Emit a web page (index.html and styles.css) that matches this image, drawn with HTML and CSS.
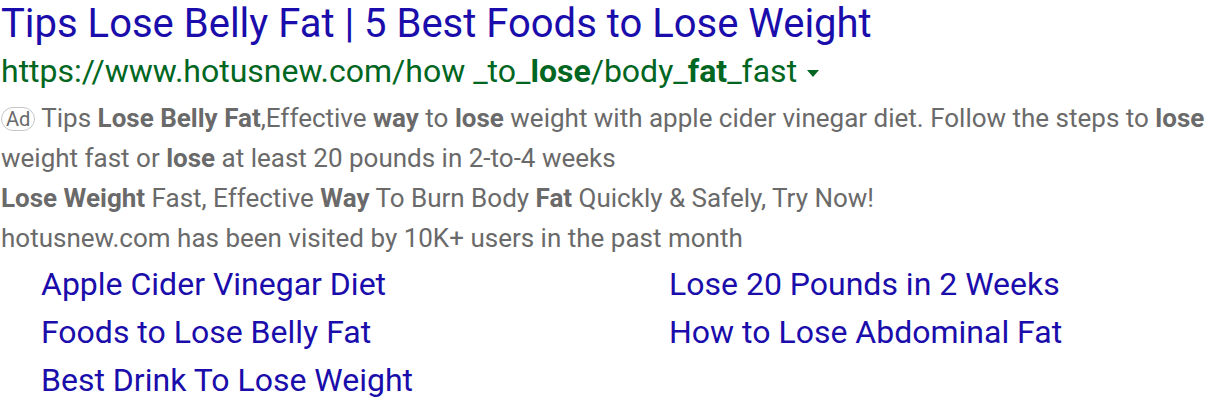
FILE: index.html
```html
<!DOCTYPE html>
<html>
<head>
<meta charset="utf-8">
<link rel="stylesheet" href="styles.css">
</head>
<body>
<div class="ad">
  <a class="title" href="#">Tips Lose Belly Fat | 5 Best Foods to Lose Weight</a>
  <div class="url">https://www.hotusnew.com/how _to_<b>lose</b>/body_<b>fat</b>_fast <span class="arrow"></span></div>
  <div class="desc first"><span class="badge">Ad</span> Tips <b>Lose Belly Fat</b>,Effective <b>way</b> to <b>lose</b> weight with apple cider vinegar diet. Follow the steps to <b>lose</b> weight fast or <b>lose</b> at least 20 pounds in 2-to-4 weeks</div>
  <div class="desc"><b>Lose Weight</b> Fast, Effective <b>Way</b> To Burn Body <b>Fat</b> Quickly &amp; Safely, Try Now!</div>
  <div class="desc">hotusnew.com has been visited by 10K+ users in the past month</div>
  <div class="sitelinks">
    <a href="#">Apple Cider Vinegar Diet</a>
    <a href="#">Lose 20 Pounds in 2 Weeks</a>
    <a href="#">Foods to Lose Belly Fat</a>
    <a href="#">How to Lose Abdominal Fat</a>
    <a href="#">Best Drink To Lose Weight</a>
  </div>
</div>
</body>
</html>
```
FILE: styles.css
```css
html, body {
  margin: 0;
  padding: 0;
  background: #fff;
}
body {
  font-family: Roboto, "Liberation Sans", sans-serif;
}
.ad {
  padding: 0 0 0 1px;
}
.title {
  display: block;
  color: #1a0dab;
  text-decoration: none;
  font-size: 40px;
  line-height: 48px;
}
.url {
  color: #006621;
  font-size: 32px;
  line-height: 46px;
}
.url b {
  font-weight: 700;
}
.arrow {
  display: inline-block;
  width: 0;
  height: 0;
  border-left: 6px solid transparent;
  border-right: 6px solid transparent;
  border-top: 7px solid #006621;
  vertical-align: middle;
  margin-left: 2px;
}
.desc {
  color: #6a6a6a;
  font-size: 26px;
  line-height: 40px;
}
.desc.first {
  margin-top: 4px;
}
.desc b {
  font-weight: 700;
}
.badge {
  display: inline-block;
  border: 1px solid #c6c6c6;
  border-radius: 12px;
  font-size: 20px;
  line-height: 22px;
  padding: 0 4px;
  color: #6a6a6a;
  vertical-align: 1px;
}
.sitelinks {
  display: grid;
  grid-template-columns: 628px 1fr;
  padding-left: 40px;
  margin-top: 2px;
}
.sitelinks a {
  color: #1a0dab;
  text-decoration: none;
  font-size: 32px;
  line-height: 48px;
}
```
